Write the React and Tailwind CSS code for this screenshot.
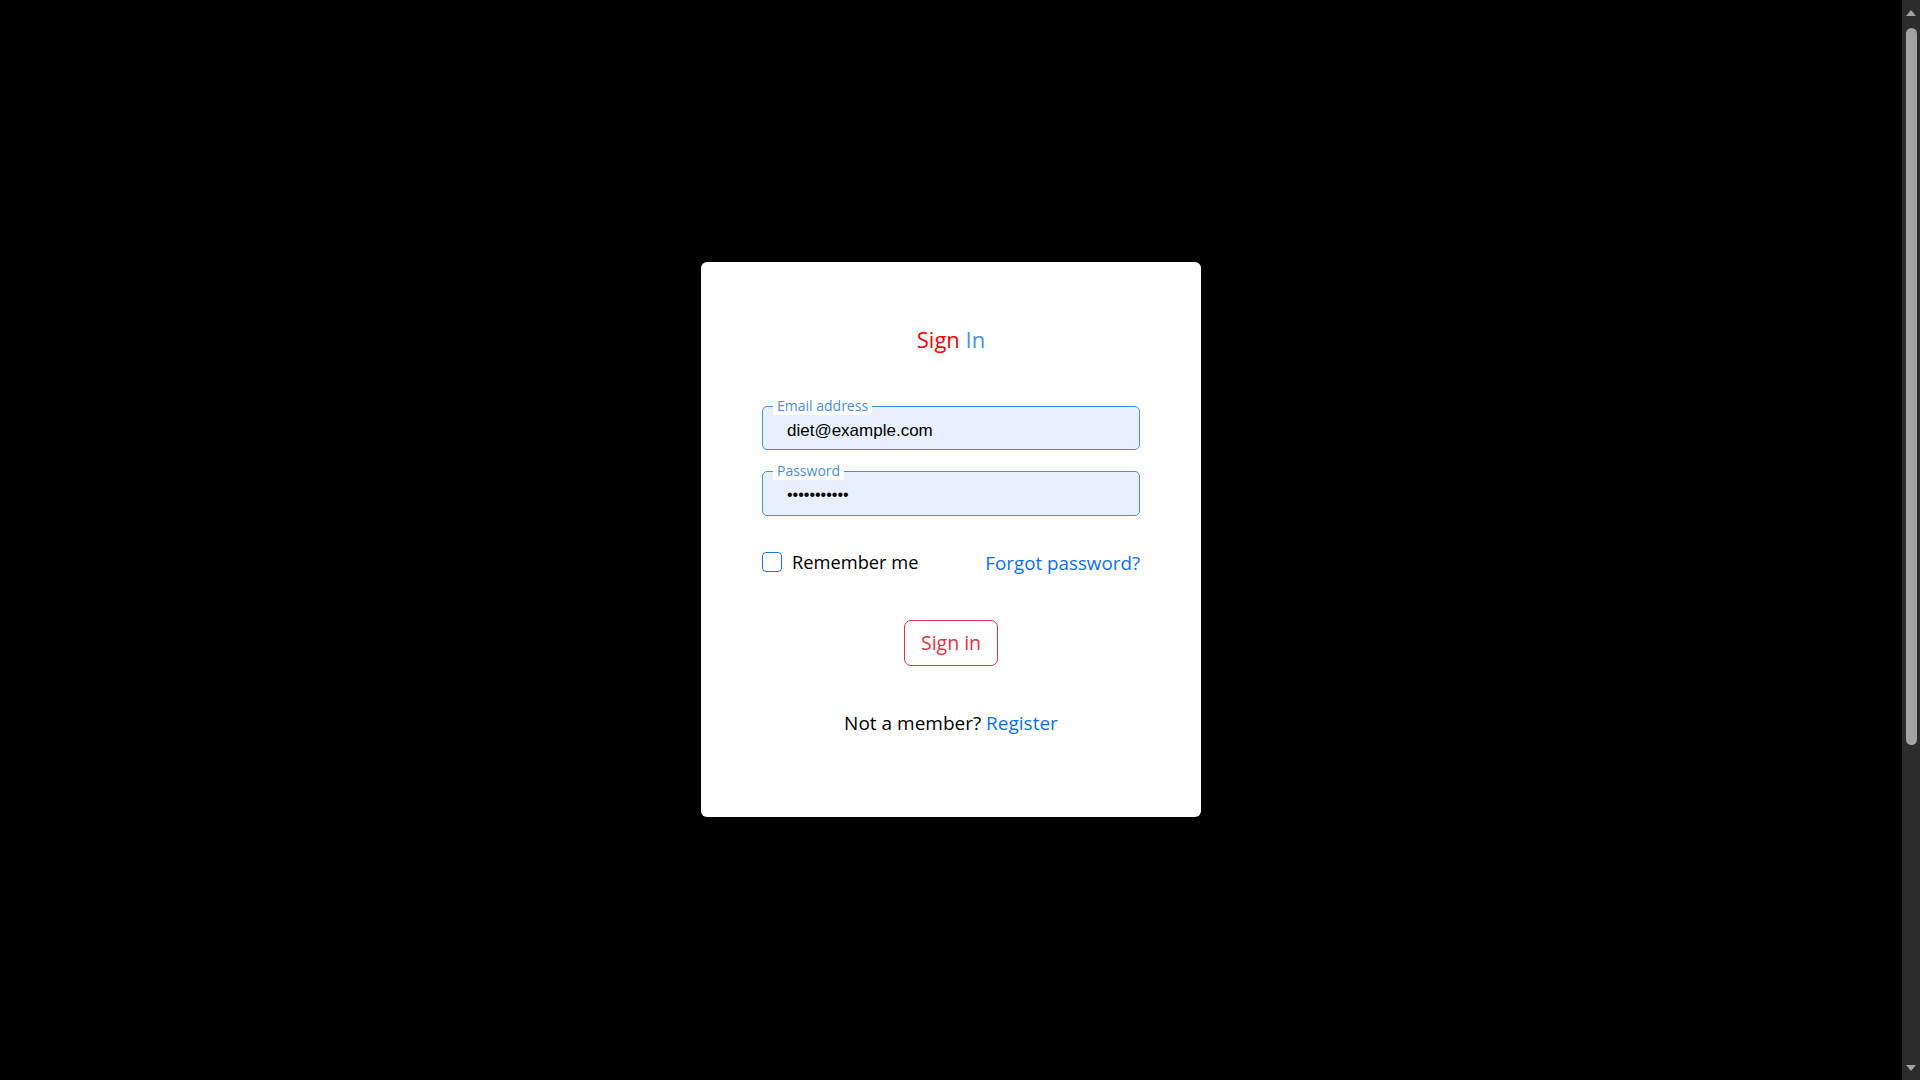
import { useState } from 'react'

export default function App() {
  const [email, setEmail] = useState('diet@example.com')
  const [password, setPassword] = useState('dietpass123')
  const [remember, setRemember] = useState(false)

  return (
    <div className="flex h-screen overflow-hidden bg-black font-['Open_Sans',sans-serif]">
      <main className="flex-1 pt-[262px]">
        <div className="mx-auto w-[500px] h-[555px] bg-white rounded-md px-[61px] pt-[62px]">

          {/* Title */}
          <h1 className="text-center text-[22px] leading-[30px]">
            <span className="text-[#ff0000]">Sign</span>{' '}
            <span className="text-[#4a90e2]">In</span>
          </h1>

          {/* Email */}
          <div className="relative mt-[52px] h-[44px] rounded-[5px] border border-[#4a8fdb] bg-[#e8f0fe]">
            <span className="absolute left-[10px] -top-[11px] bg-white px-[4px] text-[14px] leading-[19px] text-[#4a8fdb]">
              Email address
            </span>
            <input
              type="email"
              value={email}
              onChange={e => setEmail(e.target.value)}
              className="h-full w-full bg-transparent pl-[24px] pt-[5px] text-[17px] text-black outline-none font-['Liberation_Sans',Arial,sans-serif]"
            />
          </div>

          {/* Password */}
          <div className="relative mt-[21px] h-[45px] rounded-[5px] border border-[#4a8fdb] bg-[#e8f0fe]">
            <span className="absolute left-[10px] -top-[11px] bg-white px-[4px] text-[14px] leading-[19px] text-[#4a8fdb]">
              Password
            </span>
            <input
              type="password"
              value={password}
              onChange={e => setPassword(e.target.value)}
              className="h-full w-full bg-transparent pl-[24px] pt-[3px] text-[16px] text-black outline-none font-['Liberation_Sans',Arial,sans-serif]"
            />
          </div>

          {/* Remember / forgot */}
          <div className="mt-[31px] flex items-center justify-between">
            <label className="flex items-center gap-[10px] cursor-pointer">
              <input
                type="checkbox"
                checked={remember}
                onChange={e => setRemember(e.target.checked)}
                className="appearance-none w-[20px] h-[20px] rounded-[4px] border border-[#1a73e8] bg-white"
              />
              <span className="text-[18.3px] leading-[28px] text-black">Remember me</span>
            </label>
            <a href="#" className="text-[18.8px] leading-[28px] text-[#0d6efd] mt-[2px]">Forgot password?</a>
          </div>

          {/* Button */}
          <div className="mt-[43px] flex justify-center">
            <button className="h-[46px] px-[16px] rounded-[7px] border border-[#dc3545] text-[#dc3545] text-[19.5px] bg-white">
              Sign in
            </button>
          </div>

          {/* Register */}
          <p className="mt-[43px] text-center text-[19px] leading-[28px] text-black">
            Not a member? <a href="#" className="text-[#0d6efd]">Register</a>
          </p>
        </div>
      </main>

      {/* Scrollbar */}
      <aside className="w-[18px] shrink-0 bg-[#2c2c2c] flex flex-col items-center">
        <svg width="18" height="24" viewBox="0 0 18 24">
          <polygon points="4,16 14,16 9,10" fill="#a3a3a3" />
        </svg>
        <div className="mt-[4px] w-[11px] h-[717px] rounded-full bg-[#a3a3a3]" />
        <div className="flex-1" />
        <svg width="18" height="24" viewBox="0 0 18 24">
          <polygon points="4,9 14,9 9,15" fill="#a3a3a3" />
        </svg>
      </aside>
    </div>
  )
}
